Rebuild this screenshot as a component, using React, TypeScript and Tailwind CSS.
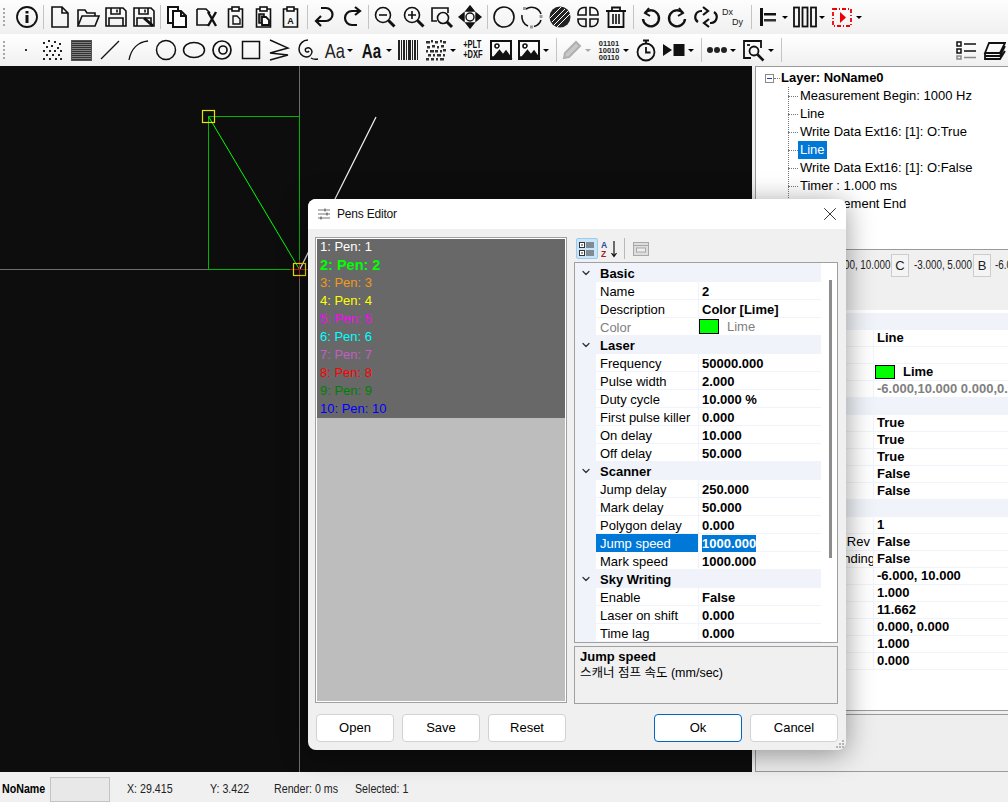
import type { ReactNode } from "react";
import { ChevronDown, X } from "lucide-react";

const SANS = "font-['Liberation_Sans','Noto_Sans_CJK_KR',sans-serif]";

function Tool({ w = "w-[28px]", children }: { w?: string; children: ReactNode }) {
  return <div className={`${w} h-full shrink-0 flex items-center justify-center`}>{children}</div>;
}

function Sep({ w = "w-[5px]" }: { w?: string }) {
  return (
    <div className={`${w} h-full shrink-0 flex items-center justify-center`}>
      <div className="w-px h-[24px] bg-[#c4c4c4]" />
    </div>
  );
}

function Caret({ w = "w-[9px]", gray = false }: { w?: string; gray?: boolean }) {
  return (
    <div className={`${w} h-full shrink-0 flex items-center`}>
      <div
        className={`w-0 h-0 border-x-[3px] border-x-transparent border-t-[3px] ${gray ? "border-t-[#aaaaaa]" : "border-t-black"}`}
      />
    </div>
  );
}

function Grip({ h }: { h: string }) {
  return <div className={`${h} w-[2px] border-l-2 border-dotted border-[#a8a8a8]`} />;
}

// the app's status text is a narrow face, squeeze it
function Squeezed({ children, className = "" }: { children: ReactNode; className?: string }) {
  return <span className={`inline-block origin-left scale-x-[.82] whitespace-nowrap ${className}`}>{children}</span>;
}

function Ico({ children, sw = 1.6, c = "#111111" }: { children: ReactNode; sw?: number; c?: string }) {
  return (
    <svg width="24" height="24" viewBox="0 0 24 24" fill="none" stroke={c} strokeWidth={sw}>
      {children}
    </svg>
  );
}

function Clipboard({ children }: { children: ReactNode }) {
  return (
    <Ico>
      <path d="M8 4H4.500v18h14V4H15" />
      <rect x="8" y="2" width="7" height="4" />
      {children}
    </Ico>
  );
}

function Floppy({ children }: { children?: ReactNode }) {
  return (
    <Ico>
      <path d="M2 3h17l3 3v15H2z" />
      <path d="M7 3v6h9V3M13 4.500v3" />
      <path d="M5 21v-8h14v8" />
      {children}
    </Ico>
  );
}

function Mag({ children }: { children?: ReactNode }) {
  return (
    <Ico>
      <circle cx="10" cy="10" r="7.500" />
      <path d="M15.500 15.500l6 6" strokeWidth="3" />
      {children}
    </Ico>
  );
}

function Picture() {
  return (
    <Ico>
      <rect x="2" y="3" width="20" height="18" strokeWidth="2" />
      <circle cx="8" cy="8" r="2" />
      <path d="M3 20l7-8 4 5 3-4 5 7z" fill="#111111" />
      <path d="M4 18L14 6" stroke="#ffffff" strokeWidth="1.200" />
    </Ico>
  );
}

const SPECKLE = [
  [3, 4], [8, 2], [14, 3], [19, 5], [6, 8], [11, 7], [17, 9], [3, 12], [9, 12], [14, 12],
  [20, 12], [6, 16], [12, 16], [18, 16], [3, 20], [9, 20], [15, 20], [20, 20],
];

const QR = [
  [2, 3, 4], [7, 2, 2], [11, 3, 3], [16, 2, 2], [19, 3, 3], [3, 8, 3], [8, 7, 3], [13, 8, 2], [17, 7, 3],
  [2, 12, 2], [6, 12, 4], [11, 12, 3], [16, 12, 2], [19, 11, 3], [4, 16, 3], [9, 16, 2], [13, 16, 4], [19, 16, 2],
  [2, 20, 3], [7, 20, 3], [12, 20, 2], [16, 20, 4],
];

const BARS = [
  [2, 2], [5, 1], [7, 2], [10, 1], [12, 3], [16, 1], [18, 2], [21, 1],
];

function ToolbarOne() {
  return (
    <div className="h-[34px] flex items-center bg-gradient-to-b from-[#fdfdfd] to-[#f0f0f0]">
      <div className="w-[13px] pl-[3px] shrink-0"><Grip h="h-[18px]" /></div>
      <Tool><Ico sw={1.800}><circle cx="12" cy="12" r="10" /><rect x="10.500" y="10" width="3" height="8" fill="#111" stroke="none" /><rect x="10.500" y="6" width="3" height="2.500" fill="#111" stroke="none" /></Ico></Tool>
      <Sep />
      <Tool><Ico><path d="M4 2h10l6 6v14H4zM14 2v6h6" /></Ico></Tool>
      <Tool><Ico><path d="M2 21V5h7l2 3h8v3M2 21l4-10h17l-4 10z" /></Ico></Tool>
      <Tool><Floppy /></Tool>
      <Tool><Floppy><path d="M12 13l9 8" strokeWidth="3" /></Floppy></Tool>
      <Sep />
      <Tool><Ico><path d="M3 2h10v4H8v12H3z" fill="#ffffff" strokeWidth="2" /><path d="M8 6h8l5 5v11H8zM16 6v5h5" fill="#ffffff" strokeWidth="2" /></Ico></Tool>
      <Tool w="w-[31px]"><Ico><path d="M2 4h9l4 4M2 4v16h11" /><path d="M13 7l8 14M21 7l-8 14" strokeWidth="2.400" /></Ico></Tool>
      <Tool><Clipboard><path d="M9 11h4l3 3v5H9z" strokeWidth="1.400" /></Clipboard></Tool>
      <Tool><Clipboard><path d="M7 9h5v9H7z" fill="#777777" /><path d="M10 12h4l3 3v5h-7z" fill="#ffffff" strokeWidth="1.800" /></Clipboard></Tool>
      <Tool w="w-[26px]"><Clipboard><text x="11.500" y="19" fontSize="9" fontWeight="700" textAnchor="middle" fill="#111111" stroke="none" className={SANS}>A</text></Clipboard></Tool>
      <Sep w="w-[6px]" />
      <Tool><Ico sw={2.200}><path d="M9 3h5a6.500 6.500 0 0 1 0 13H4" /><path d="M9 11l-5 5 5 5" /></Ico></Tool>
      <Tool><Ico sw={2.200}><path d="M20 6h-8a6.500 6.500 0 0 0 0 14h5" /><path d="M15 2l5 4-5 4" /></Ico></Tool>
      <Sep />
      <Tool><Mag><path d="M6 10h8" /></Mag></Tool>
      <Tool w="w-[29px]"><Mag><path d="M6 10h8M10 6v8" /></Mag></Tool>
      <Tool w="w-[27px]"><Ico><path d="M7 16H2V3h16v5" /><circle cx="13" cy="13" r="5.500" /><path d="M17 17l5 5" strokeWidth="3" /></Ico></Tool>
      <Tool w="w-[29px]"><Ico sw={1.400}><circle cx="12" cy="12" r="4" /><path d="M12 1l4 5H8zM12 23l4-5H8zM1 12l5-4v8zM23 12l-5-4v8z" fill="#111111" /></Ico></Tool>
      <Sep w="w-[6px]" />
      <Tool><Ico><circle cx="12" cy="12" r="10" /></Ico></Tool>
      <Tool><Ico><path d="M6 4a10 10 0 0 1 15 5M21 15a10 10 0 0 1-7 6.500M8 21a10 10 0 0 1-6-11" /><rect x="3" y="2" width="3" height="3" fill="#999999" stroke="none" /><rect x="19.500" y="10" width="3" height="3" fill="#999999" stroke="none" /><rect x="10" y="20.500" width="3" height="3" fill="#999999" stroke="none" /></Ico></Tool>
      <Tool><Ico sw={0}><circle cx="12" cy="12" r="10.500" fill="#222222" /><path d="M4 17L17 4M6 20L20 6M9 22L22 9M2 13L13 2" stroke="#ffffff" strokeWidth="1" /></Ico></Tool>
      <Tool><Ico><path d="M10 2.500H8a6 6 0 0 0-6 6v1.500h8zM14 2.500h2a6 6 0 0 1 6 6v1.500h-8zM10 21.500H8a6 6 0 0 1-6-6V14h8zM14 21.500h2a6 6 0 0 0 6-6V14h-8z" /></Ico></Tool>
      <Tool><Ico><path d="M2 6h20M8 6V2.500h8V6M4.500 6v16h15V6" strokeWidth="1.800" /><path d="M9 9v10M12 9v10M15 9v10" /></Ico></Tool>
      <Sep w="w-[6px]" />
      <Tool><Ico sw={2}><path d="M7 8a8 8 0 1 1-2 6" strokeWidth="2.400" /><path d="M11 3L7 8l5 3" /></Ico></Tool>
      <Tool w="w-[27px]"><Ico sw={2}><path d="M17 8a8 8 0 1 0 2 6" strokeWidth="2.400" /><path d="M13 3l4 5-5 3" /></Ico></Tool>
      <Tool w="w-[29px]"><Ico sw={2.200}><path d="M8 6H7a6 6 0 0 0-3 11M16 18h1a6 6 0 0 0 3-11" /><path d="M9 2L14 6 9 10M15 14l-5 4 5 4" /></Ico></Tool>
      <Tool>
        <svg width="24" height="24" viewBox="0 0 24 24" className={SANS}>
          <text x="0" y="10" fontSize="9" fill="#222222">Dx</text>
          <text x="10" y="20" fontSize="9" fill="#222222">Dy</text>
        </svg>
      </Tool>
      <Sep w="w-[6px]" />
      <Tool><Ico sw={0}><rect x="4" y="3" width="3" height="18" fill="#111" /><rect x="8" y="8" width="12" height="2.500" fill="#111" /><rect x="8" y="14" width="12" height="2.500" fill="#333" /></Ico></Tool>
      <Caret />
      <Tool><Ico sw={1.800}><rect x="1" y="2.500" width="5" height="19" /><rect x="9.500" y="2.500" width="5" height="19" /><rect x="18" y="2.500" width="5" height="19" /></Ico></Tool>
      <Caret />
      <Tool><Ico c="#ee0000" sw={1.800}><rect x="3" y="4" width="18" height="17" strokeDasharray="4 2 1 2" /><path d="M10 7l6 5.500L10 18z" fill="#ee0000" stroke="none" /></Ico></Tool>
      <Caret />
    </div>
  );
}

function ToolbarTwo() {
  return (
    <div className="h-[32px] flex items-center bg-gradient-to-b from-[#ffffff] to-[#f0f0f0]">
      <div className="w-[14px] pl-[3px] shrink-0"><Grip h="h-[18px]" /></div>
      <Tool w="w-[24px]"><div className="w-[2px] h-[2px] bg-[#333333]" /></Tool>
      <Tool><Ico sw={0}>{SPECKLE.map(([x, y]) => <rect key={`${x}-${y}`} x={x} y={y} width="2" height="2" fill="#222222" />)}</Ico></Tool>
      <Tool w="w-[30px]"><div className="w-[21px] h-[21px] bg-[repeating-linear-gradient(0deg,#333333_0,#333333_1px,#808080_1px,#808080_2px)] border border-[#555555]" /></Tool>
      <Tool><Ico sw={1.300}><path d="M3 21L21 3" /></Ico></Tool>
      <Tool><Ico sw={1.300}><path d="M3 22C5 11 12 4 22 3" /></Ico></Tool>
      <Tool><Ico sw={1.500}><circle cx="12" cy="12" r="9.500" /></Ico></Tool>
      <Tool><Ico sw={1.500}><ellipse cx="12" cy="12" rx="10.500" ry="7.500" /></Ico></Tool>
      <Tool><Ico sw={1.700}><circle cx="12" cy="12" r="9" /><circle cx="13" cy="12" r="4" /></Ico></Tool>
      <Tool w="w-[29px]"><Ico sw={1.500}><rect x="3.500" y="3.500" width="17" height="17" /></Ico></Tool>
      <Tool><Ico sw={1.400}><path d="M3 2L21 10 3 15 21 17 3 22" /></Ico></Tool>
      <Tool w="w-[29px]"><Ico sw={1.500}><path d="M13 13a2 2 0 1 1-2-3 4 4 0 0 1 5 4 6 6 0 0 1-6 5 8 8 0 0 1-7-8 9 9 0 0 1 9-9M15 20q3 2 7 1" /></Ico></Tool>
      <Tool w="w-[25px]"><span className="inline-block scale-x-[.78] text-[21px] text-[#222222] leading-none">Aa</span></Tool>
      <Caret w="w-[10px]" />
      <Tool w="w-[29px]"><span className="inline-block scale-x-[.72] text-[21px] font-bold text-[#111111] leading-none">Aa</span></Tool>
      <Caret w="w-[8px]" />
      <Tool><Ico sw={0}>{BARS.map(([x, w]) => <rect key={x} x={x} y="2" width={w} height="20" fill="#222222" />)}</Ico></Tool>
      <Tool><Ico sw={0}>{QR.map(([x, y, w]) => <rect key={`${x}-${y}`} x={x} y={y} width={w} height="2.500" fill="#333333" />)}</Ico></Tool>
      <Caret />
      <Tool>
        <div className="scale-x-[.75] text-[10px] font-bold leading-[10px] text-[#111111]">
          <div>+PLT</div>
          <div>+DXF</div>
        </div>
      </Tool>
      <Tool><Picture /></Tool>
      <Tool><Picture /></Tool>
      <Caret w="w-[10px]" />
      <Sep w="w-[6px]" />
      <Tool w="w-[26px]"><Ico c="#b0b0b0" sw={2}><path d="M4 20l1-5L16 4l4 4L9 19z" fill="#c8c8c8" /></Ico></Tool>
      <Caret w="w-[10px]" gray />
      <Tool>
        <div className="text-[7.500px] font-bold leading-[7px] text-[#222222] text-center">
          <div>01101</div>
          <div>10010</div>
          <div>00110</div>
        </div>
      </Tool>
      <Caret />
      <Tool><Ico sw={1.800}><circle cx="12" cy="14" r="8.500" /><path d="M12 9v5.500h4.500M9 2.500h6M12 2.500v3" /></Ico></Tool>
      <Tool><Ico sw={0}><path d="M1 6l9 6-9 6z" fill="#111" /><rect x="11.500" y="6" width="11" height="12" fill="#111" /></Ico></Tool>
      <Caret w="w-[10px]" />
      <Sep w="w-[6px]" />
      <Tool w="w-[26px]"><Ico sw={0}><circle cx="5" cy="12" r="3" fill="#222" /><circle cx="12" cy="12" r="3" fill="#222" /><circle cx="19" cy="12" r="3" fill="#222" /></Ico></Tool>
      <Caret w="w-[10px]" />
      <Tool><Ico sw={1.800}><path d="M9 20H2V3h17v7" /><circle cx="12" cy="13" r="4.500" /><path d="M15.500 16.500l6 6" strokeWidth="2.600" /><path d="M5 7h3" /></Ico></Tool>
      <Caret w="w-[10px]" />
      <Sep w="w-[6px]" />
      <div className="flex-1" />
      <Tool><Ico sw={1.500}><rect x="3" y="4" width="4" height="4" /><rect x="3" y="11" width="4" height="4" /><rect x="3" y="18" width="4" height="3" stroke="#888888" /><path d="M10 6h12M10 13h12" /><path d="M10 19.500h12" stroke="#888888" /></Ico></Tool>
      <Tool><Ico sw={1.800}><path d="M7 5h16l-5 10H3zM3 15v3h15l5-10M3 18v3h15l5-8" /></Ico></Tool>
    </div>
  );
}

function Canvas() {
  return (
    <div className="w-[752px] h-full shrink-0 bg-[#0d0d0d]">
      <svg width="752" height="706" viewBox="0 66 752 706" fill="none">
        <path d="M299.500 66v706" stroke="#6e6e6e" />
        <path d="M0 269.500h752" stroke="#6e6e6e" />
        <path d="M208.500 269.500V116.500H299.500V269.500H208.500" stroke="#00b400" />
        <path d="M208.500 116.500L299.500 269.500" stroke="#00ff00" />
        <path d="M376 117L300 269" stroke="#f2f2f2" strokeWidth="1.200" />
        <path d="M290 269.500h19M299.500 260v19" stroke="#c01818" />
        <rect x="202.500" y="110.500" width="12" height="12" stroke="#e6e600" strokeWidth="1.200" />
        <rect x="293.500" y="263.500" width="12" height="12" stroke="#e6e600" strokeWidth="1.200" />
      </svg>
    </div>
  );
}

const TREE = ["Measurement Begin: 1000 Hz", "Line", "Write Data Ext16: [1]: O:True", "Line", "Write Data Ext16: [1]: O:False", "Timer : 1.000 ms", "Measurement End"];

function Tree() {
  return (
    <div className="h-[184px] bg-white border-t border-b border-[#9a9a9a] pt-[2px] pl-[9px] text-[13px] text-black">
      <div className="h-[18px] flex items-center">
        <div className="w-[9px] h-[9px] border border-[#8a8a8a] flex items-center justify-center">
          <div className="w-[5px] h-px bg-[#2040a0]" />
        </div>
        <div className="w-[6px] border-t border-dotted border-[#777777] mr-[1px]" />
        <span className="font-bold">Layer: NoName0</span>
      </div>
      <div className="ml-[23px] border-l border-dotted border-[#777777] w-[200px] h-[117px] -mb-[117px]" />
      {TREE.map((t, i) => (
        <div key={i} className="h-[18px] ml-[23px] flex items-center">
          <div className="w-[10px] border-t border-dotted border-[#777777]" />
          <span className={i === 3 ? "bg-[#0078d7] text-white px-[2px] leading-[18px]" : "px-[2px]"}>{t}</span>
        </div>
      ))}
    </div>
  );
}

function CoordBar() {
  return (
    <div className="h-[60px] bg-[#f0f0f0] flex items-start pl-[71px] pt-[4px] overflow-hidden text-[12px] text-[#222222] whitespace-nowrap">
      <div className="w-[64px] shrink-0 leading-[22px]"><Squeezed>-6.000, 10.000</Squeezed></div>
      <div className="w-[18px] h-[23px] shrink-0 border border-[#cccccc] bg-[#f4f4f4] flex items-center justify-center text-[13px]">C</div>
      <div className="w-[64px] shrink-0 pl-[5px] leading-[22px]"><Squeezed>-3.000, 5.000</Squeezed></div>
      <div className="w-[18px] h-[23px] shrink-0 border border-[#cccccc] bg-[#f4f4f4] flex items-center justify-center text-[13px]">B</div>
      <div className="pl-[4px] leading-[22px]"><Squeezed>-6.000, 0.000</Squeezed></div>
    </div>
  );
}

type Row = { label?: string; labelClass?: string; value?: string; section?: boolean; lime?: boolean; gray?: boolean };

const RIGHT_ROWS: Row[] = [
  { section: true },
  { value: "Line" },
  { value: "" },
  { lime: true },
  { value: "-6.000,10.000 0.000,0.000", gray: true },
  { section: true },
  { value: "True" },
  { value: "True" },
  { value: "True" },
  { value: "False" },
  { value: "False" },
  { section: true },
  { value: "1" },
  { label: "n Rev", labelClass: "mr-[3px]", value: "False" },
  { label: "nding", labelClass: "-mr-[2px]", value: "False" },
  { value: "-6.000, 10.000" },
  { value: "1.000" },
  { value: "11.662" },
  { value: "0.000, 0.000" },
  { value: "1.000" },
  { value: "0.000" },
];

function RightGrid() {
  return (
    <div className="h-[401px] bg-white pt-[3px] border-b border-[#9a9a9a] text-[13px] text-black overflow-hidden">
      {RIGHT_ROWS.map((r, i) =>
        r.section ? (
          <div key={i} className="h-[17px] bg-[#f0f4fa]" />
        ) : (
          <div key={i} className="h-[17px] flex border-b border-[#f0f4fa]">
            <div className="w-[117px] shrink-0 flex justify-end overflow-hidden whitespace-nowrap leading-[16px]">
              <span className={`shrink-0 ${r.labelClass ?? ""}`}>{r.label}</span>
            </div>
            <div className="flex-1 border-l border-[#f0f4fa] pl-[3px] whitespace-nowrap overflow-hidden font-bold leading-[16px]">
              {r.lime ? (
                <div className="flex items-center h-full">
                  <div className="w-[20px] h-[14px] bg-[#00ff00] border border-black -ml-[2px] mr-[8px]" />
                  <span>Lime</span>
                </div>
              ) : (
                <span className={r.gray ? "text-[#808080]" : ""}>{r.value}</span>
              )}
            </div>
          </div>
        ),
      )}
    </div>
  );
}

function RightPanel() {
  return (
    <div className="w-[256px] h-full shrink-0 pl-[3px] bg-[#f0f0f0]">
      <div className="h-full border-l border-[#9a9a9a] flex flex-col">
        <Tree />
        <CoordBar />
        <RightGrid />
        <div className="h-[3px] bg-[#f0f0f0]" />
        <div className="flex-1 bg-[#eeeeee] border-t border-b border-[#9a9a9a]" />
      </div>
    </div>
  );
}

const PENS = [
  ["1: Pen: 1", "text-white"],
  ["2: Pen: 2", "text-[#00ff00] font-bold text-[14.500px]"],
  ["3: Pen: 3", "text-[#f09a1c]"],
  ["4: Pen: 4", "text-[#ffff00]"],
  ["5: Pen: 5", "text-[#ff00ff]"],
  ["6: Pen: 6", "text-[#00ffff]"],
  ["7: Pen: 7", "text-[#c060c0]"],
  ["8: Pen: 8", "text-[#ff0000]"],
  ["9: Pen: 9", "text-[#008000]"],
  ["10: Pen: 10", "text-[#0000ff]"],
];

type Section = { title: string; rows: { label: string; value: string; selected?: boolean; lime?: boolean }[] };

const SECTIONS: Section[] = [
  {
    title: "Basic",
    rows: [
      { label: "Name", value: "2" },
      { label: "Description", value: "Color [Lime]" },
      { label: "Color", value: "Lime", lime: true },
    ],
  },
  {
    title: "Laser",
    rows: [
      { label: "Frequency", value: "50000.000" },
      { label: "Pulse width", value: "2.000" },
      { label: "Duty cycle", value: "10.000 %" },
      { label: "First pulse killer", value: "0.000" },
      { label: "On delay", value: "10.000" },
      { label: "Off delay", value: "50.000" },
    ],
  },
  {
    title: "Scanner",
    rows: [
      { label: "Jump delay", value: "250.000" },
      { label: "Mark delay", value: "50.000" },
      { label: "Polygon delay", value: "0.000" },
      { label: "Jump speed", value: "1000.000", selected: true },
      { label: "Mark speed", value: "1000.000" },
    ],
  },
  {
    title: "Sky Writing",
    rows: [
      { label: "Enable", value: "False" },
      { label: "Laser on shift", value: "0.000" },
      { label: "Time lag", value: "0.000" },
    ],
  },
];

function PenGrid() {
  return (
    <div className="h-[381px] border border-[#a0a0a0] bg-[#f0f4fa] flex overflow-hidden">
      <div className="w-[246px] shrink-0 pt-[1px]">
        {SECTIONS.map((s) => (
          <div key={s.title}>
            <div className="h-[18px] flex items-center bg-[#f0f4fa]">
              <div className="w-[21px] shrink-0 flex justify-center">
                <ChevronDown size={12} strokeWidth={2.500} className="text-[#333333]" />
              </div>
              <span className="pl-[4px] pt-[1px] font-bold">{s.title}</span>
            </div>
            {s.rows.map((r) => (
              <div key={r.label} className="h-[18px] flex">
                <div className="w-[21px] shrink-0" />
                <div
                  className={`w-[102px] shrink-0 pl-[4px] whitespace-nowrap overflow-hidden border-b leading-[19px] ${
                    r.selected ? "bg-[#0078d7] text-white border-[#0078d7]" : "bg-white border-[#f0f4fa]"
                  } ${r.lime ? "text-[#808080]" : ""}`}
                >
                  {r.label}
                </div>
                <div className="flex-1 bg-white border-l border-b border-[#f0f4fa] pl-[3px] font-bold whitespace-nowrap leading-[19px]">
                  {r.lime ? (
                    <div className="flex items-center h-full font-normal text-[#808080] -ml-[3px]">
                      <div className="w-[20px] h-[15px] bg-[#00ff00] border border-black mr-[8px]" />
                      <span>{r.value}</span>
                    </div>
                  ) : (
                    <span className={r.selected ? "inline-block h-[17px] leading-[18px] bg-[#0078d7] text-white" : ""}>{r.value}</span>
                  )}
                </div>
              </div>
            ))}
          </div>
        ))}
      </div>
      <div className="flex-1 bg-white pl-[8px] pt-[17px]">
        <div className="w-[3px] h-[278px] bg-[#8c8c8c]" />
      </div>
    </div>
  );
}

function Btn({ label, primary, w }: { label: string; primary?: boolean; w: string }) {
  return (
    <button
      className={`${w} h-[28px] rounded-[4px] bg-white text-[13px] ${primary ? "border border-[#0067c0]" : "border border-[#d2d2d2]"}`}
    >
      {label}
    </button>
  );
}

function PensEditor() {
  return (
    <div className={`absolute left-[308px] top-[199px] w-[538px] h-[551px] rounded-[8px] bg-[#f0f0f0] overflow-hidden shadow-[0_4px_28px_rgba(0,0,0,0.4)] ${SANS} text-[13px] text-black`}>
      <div className="h-[30px] bg-white flex items-center pl-[9px] pr-[5px]">
        <svg width="14" height="14" viewBox="0 0 14 14" stroke="#777777" strokeWidth="1">
          <path d="M1 3h12M1 7h12M1 11h12" />
          <path d="M8 1.500v3M10 5.500v3M4 9.500v3" stroke="#444444" />
        </svg>
        <span className="ml-[6px] text-[12px] tracking-[-0.2px] text-[#111111] flex-1">Pens Editor</span>
        <X size={22} strokeWidth={1} className="text-[#222222]" />
      </div>
      <div className="flex gap-[7px] pt-[8px] pl-[7px] pr-[8px]">
        <div className="w-[252px] h-[466px] border border-[#a0a0a0] p-px bg-white">
          <div className="h-full bg-[#bdbdbd]">
            <div className="h-[179px] bg-[#686868] pl-[3px]">
              {PENS.map(([t, c]) => (
                <div key={t} className={`h-[18px] leading-[16px] ${c}`}>{t}</div>
              ))}
            </div>
          </div>
        </div>
        <div className="w-[264px]">
          <div className="h-[25px] flex items-start gap-[3px] pl-[2px] pt-[1px]">
            <div className="w-[22px] h-[21px] bg-[#cce4f7] border border-[#99ccee] rounded-[2px] flex items-center justify-center">
              <svg width="16" height="16" viewBox="0 0 16 16" fill="none" stroke="#333333" strokeWidth="1">
                <rect x="0.500" y="1.500" width="5" height="5" fill="#ffffff" />
                <rect x="0.500" y="9.500" width="5" height="5" fill="#ffffff" />
                <path d="M2 4h2M2 12h2M7 2h8M7 4h8M7 6h8M7 10h8M7 12h8M7 14h8" />
              </svg>
            </div>
            <div className="w-[18px] h-[21px] flex items-center justify-center">
              <svg width="18" height="18" viewBox="0 0 18 18" fill="none" className={SANS}>
                <text x="0" y="8" fontSize="8.500" fontWeight="700" fill="#2a4a9a">A</text>
                <text x="0" y="17" fontSize="8.500" fontWeight="700" fill="#a02020">Z</text>
                <path d="M13 1v15M10.500 13l2.500 3.500 2.500-3.500" stroke="#111111" strokeWidth="1.200" />
              </svg>
            </div>
            <div className="w-px h-[21px] bg-[#b8b8b8] mx-[2px]" />
            <div className="w-[22px] h-[21px] flex items-center justify-center">
              <svg width="16" height="16" viewBox="0 0 16 16" fill="#dddddd" stroke="#a8a8a8">
                <rect x="0.500" y="1.500" width="15" height="13" />
                <path d="M0.500 4.500h15" />
                <rect x="3.500" y="7" width="9" height="4" fill="#eeeeee" />
              </svg>
            </div>
          </div>
          <PenGrid />
          <div className="h-[58px] mt-[3px] border border-[#a0a0a0] pl-[5px] pt-[1px] leading-[17px]">
            <div className="font-bold">Jump speed</div>
            <div className="text-[12.500px]">스캐너 점프 속도 (mm/sec)</div>
          </div>
        </div>
      </div>
      <div className="flex pt-[10px] px-[8px]">
        <div className="flex gap-[8px]">
          <Btn label="Open" w="w-[78px]" />
          <Btn label="Save" w="w-[78px]" />
          <Btn label="Reset" w="w-[78px]" />
        </div>
        <div className="flex-1" />
        <div className="flex gap-[8px]">
          <Btn label="Ok" w="w-[88px]" primary />
          <Btn label="Cancel" w="w-[88px]" />
        </div>
      </div>
      <div className="absolute right-[1px] bottom-[1px]">
        <svg width="10" height="10" viewBox="0 0 10 10" fill="#b4b4b4">
          <rect x="7" y="1" width="2" height="2" />
          <rect x="4" y="4" width="2" height="2" />
          <rect x="7" y="4" width="2" height="2" />
          <rect x="1" y="7" width="2" height="2" />
          <rect x="4" y="7" width="2" height="2" />
          <rect x="7" y="7" width="2" height="2" />
        </svg>
      </div>
    </div>
  );
}

function StatusBar() {
  return (
    <div className="h-[30px] bg-[#f0f0f0] flex items-center pt-[4px] text-[13px] text-[#222222] whitespace-nowrap">
      <div className="w-[50px] pl-[2px] font-bold text-black"><Squeezed>NoName</Squeezed></div>
      <div className="w-[60px] h-[25px] bg-[#e8e8e8] border border-[#c4c4c4]" />
      <div className="ml-[17px] w-[83px]"><Squeezed>X: 29.415</Squeezed></div>
      <div className="w-[64px]"><Squeezed>Y: 3.422</Squeezed></div>
      <div className="w-[81px]"><Squeezed>Render: 0 ms</Squeezed></div>
      <div><Squeezed>Selected: 1</Squeezed></div>
    </div>
  );
}

export default function App() {
  return (
    <div className={`relative w-[1008px] h-[802px] overflow-hidden flex flex-col bg-[#f0f0f0] ${SANS}`}>
      <ToolbarOne />
      <ToolbarTwo />
      <div className="h-[706px] flex">
        <Canvas />
        <RightPanel />
      </div>
      <StatusBar />
      <PensEditor />
    </div>
  );
}
